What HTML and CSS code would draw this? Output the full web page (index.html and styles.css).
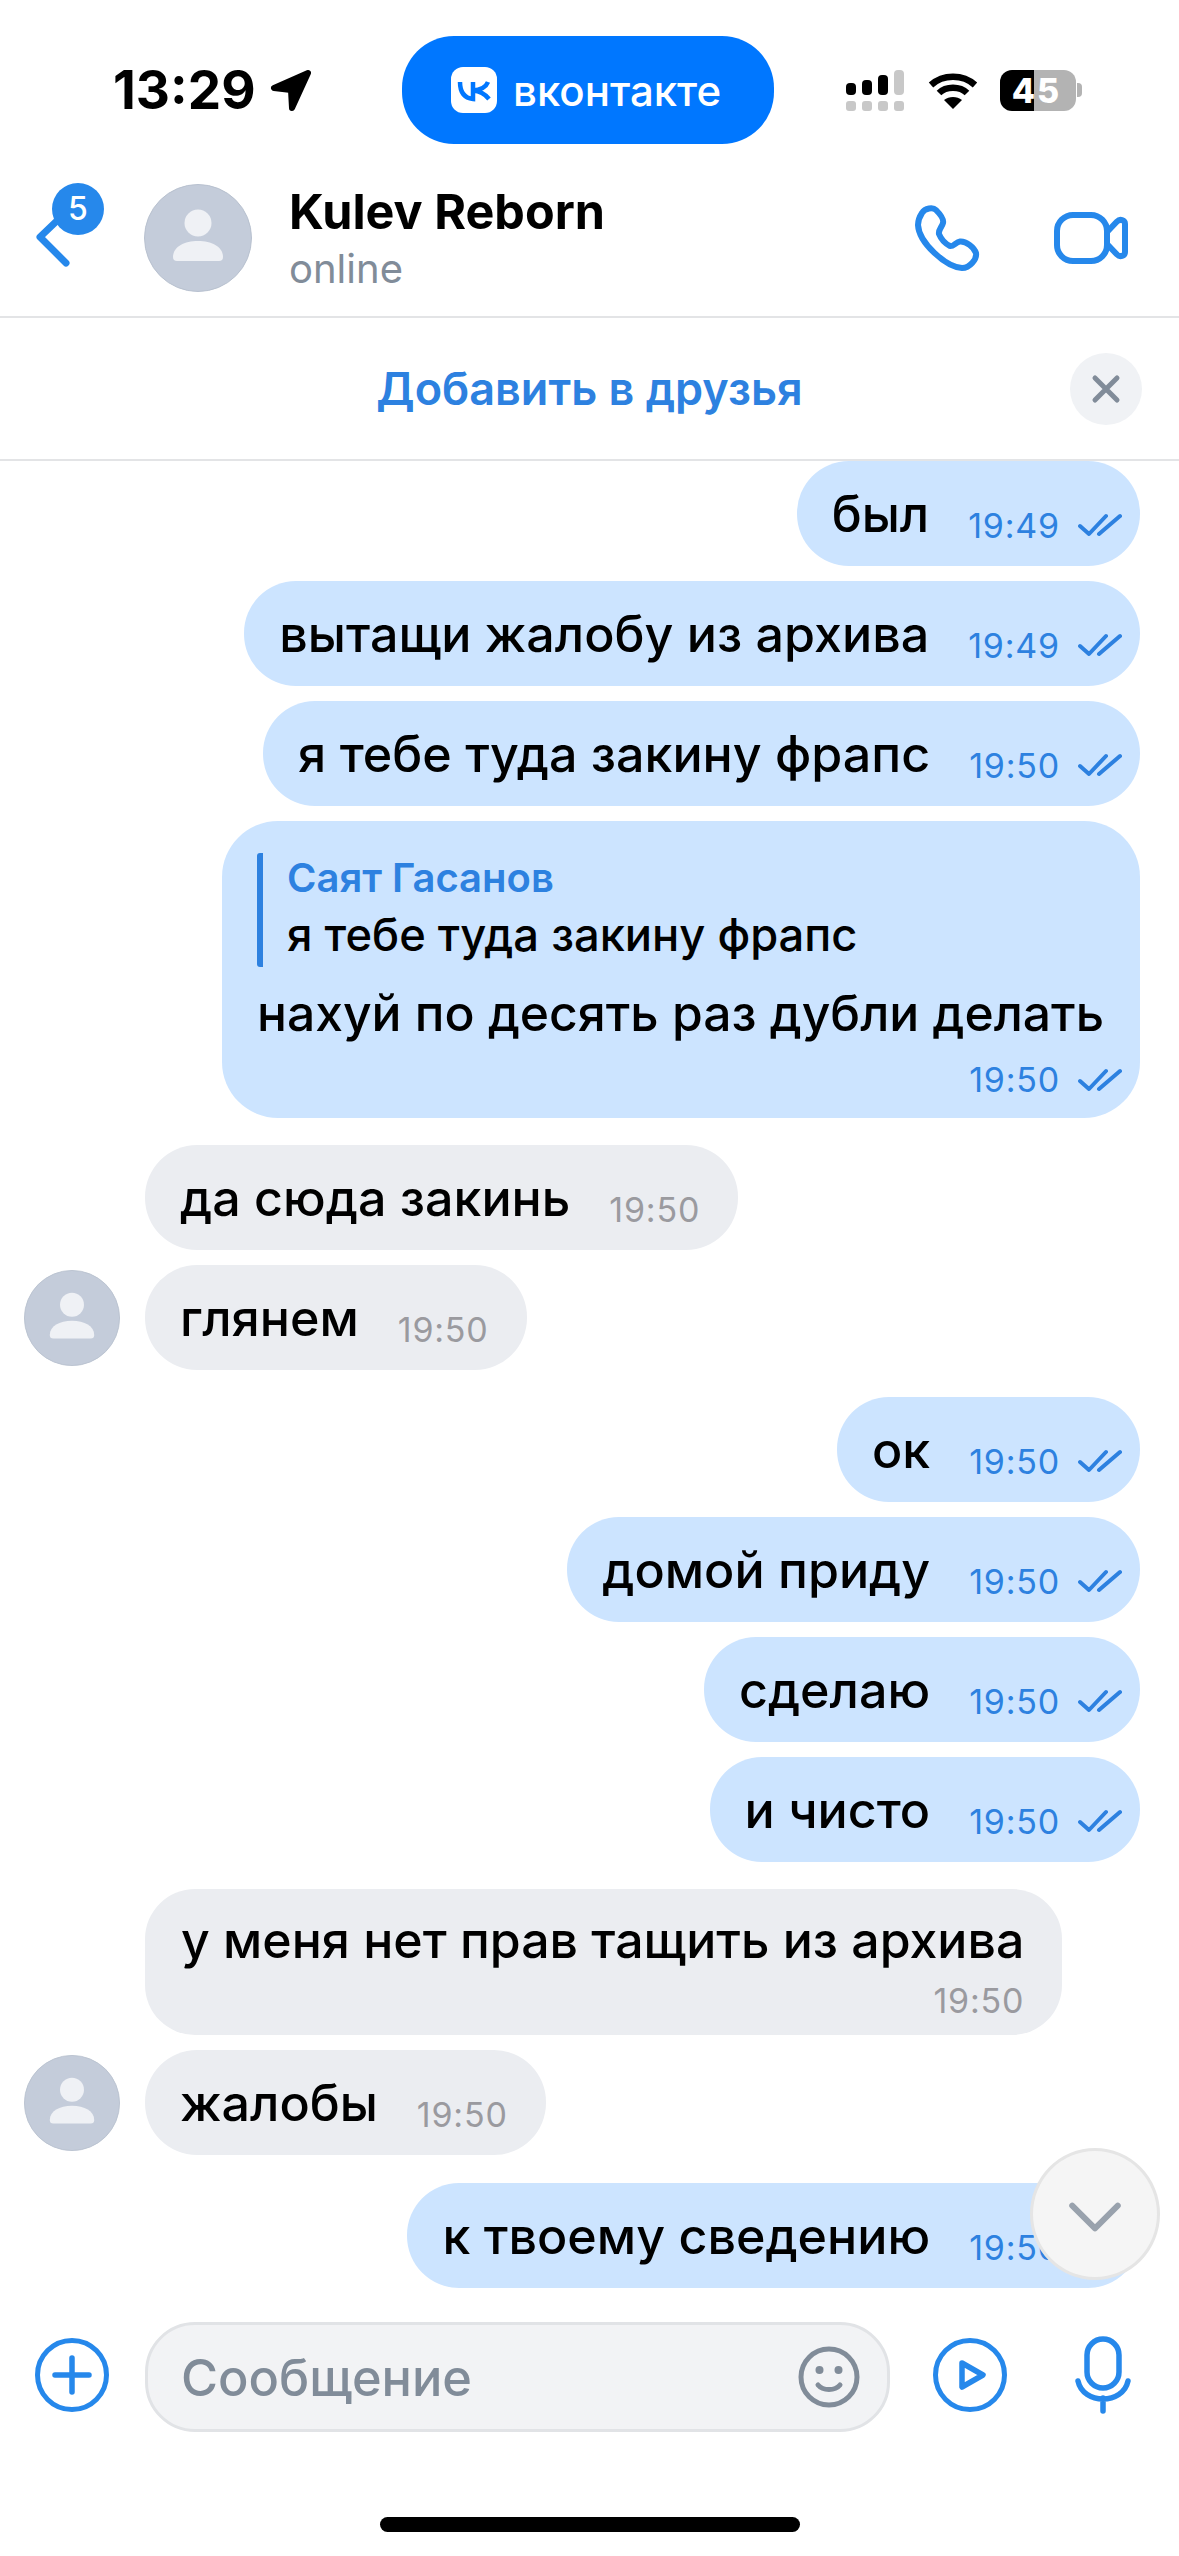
FILE: index.html
```html
<!DOCTYPE html>
<html lang="ru">
<head>
  <meta charset="UTF-8" />
  <title>Kulev Reborn</title>
  <link rel="stylesheet" href="styles.css">
</head>
<body>
  <svg class="defs">
    <symbol id="seen" viewBox="0 0 44 24"><path d="M2 13 L11 21 L28 3 M21 21 L42 3" fill="none" stroke="#2d81e0" stroke-width="4" stroke-linecap="round" stroke-linejoin="round"/></symbol>
    <symbol id="person" viewBox="0 0 108 108"><circle cx="54" cy="54" r="53.500" fill="#c4ccda" stroke="#b8c1cf"/><circle cx="54" cy="39" r="13.500" fill="#eff1f5"/><path d="M29 73 C29 63 40 57 54 57 S79 63 79 73 A4 4 0 0 1 75 77 H33 A4 4 0 0 1 29 73 Z" fill="#eff1f5"/></symbol>
  </svg>

  <div class="status">
    <span class="clock">13:29</span>
    <svg class="loc" width="41" height="41" viewBox="0 0 41 41"><path d="M38 3 L4 18 L21 20 L22 38 Z" fill="#000" stroke="#000" stroke-width="6" stroke-linejoin="round"/></svg>
    <div class="pill">
      <svg width="46" height="46" viewBox="0 0 46 46"><rect width="46" height="46" rx="12" fill="#fff"/><path d="M9 15 C9 25 13 31 22 32 V15 M37 15 C35 20 29 23 22 23.500 C29 24 34 27 38 32" fill="none" stroke="#0077ff" stroke-width="4.500"/></svg>
      <span>вконтакте</span>
    </div>
    <div class="signal">
      <div class="bars"><i class="b1"></i><i class="b2"></i><i class="b3"></i><i class="b4"></i></div>
      <div class="dots"><i></i><i></i><i></i><i></i></div>
    </div>
    <svg class="wifi" width="50" height="38" viewBox="0 0 50 38"><path d="M3 14 C15 3 35 3 47 14 M11 22 C18 15 32 15 39 22" fill="none" stroke="#000" stroke-width="6.500"/><path d="M16 29 C21 25 29 25 34 29 L25 38 Z" fill="#000"/></svg>
    <div class="battery">45</div>
    <div class="nub"></div>
  </div>

  <header class="head">
    <div class="back">
      <svg width="40" height="62" viewBox="0 0 40 62"><path d="M28 8 L5 30 L31 56" fill="none" stroke="#2688eb" stroke-width="7" stroke-linecap="round" stroke-linejoin="round"/></svg>
      <span class="badge">5</span>
    </div>
    <svg class="ava big"><use href="#person"/></svg>
    <div class="who">
      <div class="name">Kulev Reborn</div>
      <div class="online">online</div>
    </div>
    <svg class="phone" width="66" height="66" viewBox="0 0 66 66"><path d="M8 8 C11 3 19 2 22 5 C26 9 30 14 29 18 C28 22 24 25 25 29 C27 34 32 39 36 41 C39 42 42 37 46 36.500 C52 36 60 42 62 48 C63 54 56 63 48 63 C32 62 5 38 4 20 C4 15 6 11 8 8 Z" fill="none" stroke="#2688eb" stroke-width="6" stroke-linejoin="round"/></svg>
    <svg class="video" width="74" height="52" viewBox="0 0 74 52"><rect x="3" y="3" width="50" height="46" rx="16" fill="none" stroke="#2688eb" stroke-width="6"/><path d="M53 20 L63 9.500 C66 6.500 71 8 71 12 V40 C71 44 66 45.500 63 42.500 L53 32" fill="none" stroke="#2688eb" stroke-width="6" stroke-linejoin="round"/></svg>
  </header>

  <div class="addbar">
    <span></span>
    <span class="addtext">Добавить в друзья</span>
    <div class="close">
      <svg width="34" height="34" viewBox="0 0 34 34"><path d="M6 6 L28 28 M28 6 L6 28" stroke="#818c99" stroke-width="5" stroke-linecap="round"/></svg>
    </div>
  </div>

  <main class="chat">
    <div class="row out"><div class="bubble"><span class="text">был</span><span class="time">19:49</span><svg class="check"><use href="#seen"/></svg></div></div>
    <div class="row out"><div class="bubble"><span class="text">вытащи жалобу из архива</span><span class="time">19:49</span><svg class="check"><use href="#seen"/></svg></div></div>
    <div class="row out"><div class="bubble"><span class="text">я тебе туда закину фрапс</span><span class="time">19:50</span><svg class="check"><use href="#seen"/></svg></div></div>
    <div class="row out">
      <div class="bubble reply">
        <div class="quote">
          <div class="qname">Саят Гасанов</div>
          <div class="qtext">я тебе туда закину фрапс</div>
        </div>
        <div class="text">нахуй по десять раз дубли делать</div>
        <div class="meta"><span class="time">19:50</span><svg class="check"><use href="#seen"/></svg></div>
      </div>
    </div>

    <div class="row in group"><div class="bubble"><span class="text">да сюда закинь</span><span class="time">19:50</span></div></div>
    <div class="row in tail">
      <svg class="ava"><use href="#person"/></svg>
      <div class="bubble"><span class="text">глянем</span><span class="time">19:50</span></div>
    </div>

    <div class="row out group"><div class="bubble"><span class="text">ок</span><span class="time">19:50</span><svg class="check"><use href="#seen"/></svg></div></div>
    <div class="row out"><div class="bubble"><span class="text">домой приду</span><span class="time">19:50</span><svg class="check"><use href="#seen"/></svg></div></div>
    <div class="row out"><div class="bubble"><span class="text">сделаю</span><span class="time">19:50</span><svg class="check"><use href="#seen"/></svg></div></div>
    <div class="row out"><div class="bubble"><span class="text">и чисто</span><span class="time">19:50</span><svg class="check"><use href="#seen"/></svg></div></div>

    <div class="row in group">
      <div class="bubble long">
        <div class="text">у меня нет прав тащить из архива</div>
        <div class="meta"><span class="time">19:50</span></div>
      </div>
    </div>
    <div class="row in tail">
      <svg class="ava"><use href="#person"/></svg>
      <div class="bubble"><span class="text">жалобы</span><span class="time">19:50</span></div>
    </div>

    <div class="row out group2"><div class="bubble"><span class="text">к твоему сведению</span><span class="time">19:50</span><svg class="check"><use href="#seen"/></svg></div></div>

    <div class="scroll-down">
      <svg width="54" height="31" viewBox="0 0 58 34"><path d="M4 4 L29 29 L54 4" fill="none" stroke="#99a2ad" stroke-width="6.500" stroke-linecap="round" stroke-linejoin="round"/></svg>
    </div>
  </main>

  <footer class="composer">
    <svg width="74" height="74" viewBox="0 0 74 74"><circle cx="37" cy="37" r="34.500" fill="none" stroke="#2688eb" stroke-width="5"/><path d="M37 20 V54 M20 37 H54" stroke="#2688eb" stroke-width="5.500" stroke-linecap="round"/></svg>
    <div class="input">
      <span class="placeholder">Сообщение</span>
      <svg width="62" height="62" viewBox="0 0 62 62"><circle cx="31" cy="31" r="28" fill="none" stroke="#818c99" stroke-width="5"/><circle cx="21.500" cy="24" r="4" fill="#818c99"/><circle cx="40.500" cy="24" r="4" fill="#818c99"/><path d="M20 39 C25 45 37 45 42 39" fill="none" stroke="#818c99" stroke-width="5" stroke-linecap="round"/></svg>
    </div>
    <svg class="play" width="74" height="74" viewBox="0 0 74 74"><circle cx="37" cy="37" r="34.500" fill="none" stroke="#2688eb" stroke-width="5"/><path d="M29 25 L50 37 L29 49 Z" fill="none" stroke="#2688eb" stroke-width="5.500" stroke-linejoin="round"/></svg>
    <svg class="mic" width="56" height="78" viewBox="0 0 56 78"><rect x="12" y="3" width="32" height="49" rx="16" fill="none" stroke="#2688eb" stroke-width="5.500"/><path d="M3 45 C8 69 48 69 53 45 M28 62 V75" fill="none" stroke="#2688eb" stroke-width="5.500" stroke-linecap="round"/></svg>
  </footer>
  <div class="homebar"></div>
</body>
</html>
```

FILE: styles.css
```css
* { box-sizing: border-box; }
html, body {
  margin: 0;
  padding: 0;
}
body {
  width: 1179px;
  height: 2556px;
  overflow: hidden;
  background: #fff;
  color: #000;
  font-family: Inter, "Liberation Sans", sans-serif;
  display: flex;
  flex-direction: column;
}
.defs { display: none; }

/* status bar */
.status {
  height: 165px;
  flex: none;
  display: flex;
  align-items: center;
  padding-left: 113px;
  padding-top: 15px;
}
.clock {
  font-size: 53px;
  font-weight: 700;
  width: 142px;
  white-space: nowrap;
}
.loc { margin-left: 15px; }
.pill {
  width: 372px;
  height: 108px;
  margin-left: 91px;
  background: #0077ff;
  border-radius: 52px;
  display: flex;
  align-items: center;
  padding-left: 49px;
  gap: 16px;
  color: #fff;
  font-size: 42px;
  font-weight: 500;
}
.signal {
  margin-left: 72px;
  width: 58px;
  display: flex;
  flex-direction: column;
  gap: 6px;
}
.bars, .dots {
  display: flex;
  justify-content: space-between;
  align-items: flex-end;
}
.bars i {
  width: 10px;
  background: #000;
  border-radius: 4px;
}
.b1 { height: 12px; }
.b2 { height: 15px; }
.b3 { height: 20px; }
.bars .b4 { height: 25px; background: #c8c8c8; }
.dots i {
  width: 10px;
  height: 10px;
  background: #c8c8c8;
  border-radius: 3px;
}
.wifi { margin-left: 24px; }
.battery {
  margin-left: 22px;
  width: 76px;
  height: 41px;
  border-radius: 12px;
  background: linear-gradient(90deg, #000 0, #000 34px, #b3b3b3 34px);
  color: #fff;
  font-size: 34px;
  font-weight: 800;
  letter-spacing: 2px;
  padding-right: 3px;
  text-align: center;
  line-height: 41px;
}
.nub {
  margin-left: 1px;
  width: 5px;
  height: 14px;
  background: #b3b3b3;
  border-radius: 0 4px 4px 0;
}

/* header */
.head {
  height: 153px;
  flex: none;
  display: flex;
  align-items: center;
  border-bottom: 2px solid #e3e4e6;
  padding-left: 35px;
  padding-bottom: 6px;
}
.back {
  position: relative;
  width: 109px;
  height: 62px;
}
.back svg { display: block; }
.badge {
  position: absolute;
  left: 17px;
  top: -24px;
  width: 52px;
  height: 52px;
  border-radius: 50%;
  background: #2688eb;
  color: #fff;
  font-size: 32px;
  font-weight: 500;
  text-align: center;
  line-height: 52px;
}
.ava {
  width: 96px;
  height: 96px;
  flex: none;
}
.ava.big {
  width: 108px;
  height: 108px;
}
.who {
  margin-left: 37px;
  flex: 1;
}
.name {
  font-size: 48.500px;
  font-weight: 700;
  line-height: 56px;
}
.online {
  font-size: 40px;
  color: #818c99;
  line-height: 46px;
  margin-top: 6px;
}
.phone { margin-right: 74px; }
.video { margin-right: 51px; }

/* add to friends */
.addbar {
  height: 143px;
  flex: none;
  display: grid;
  grid-template-columns: 1fr auto 1fr;
  align-items: center;
  padding: 0 37px;
  border-bottom: 2px solid #e3e4e6;
}
.addtext {
  color: #2d81e0;
  font-size: 45px;
  font-weight: 600;
}
.close {
  justify-self: end;
  width: 72px;
  height: 72px;
  border-radius: 50%;
  background: #f0f2f5;
  display: flex;
  align-items: center;
  justify-content: center;
}

/* messages */
.chat {
  flex: 1;
  position: relative;
  overflow: hidden;
  display: flex;
  flex-direction: column;
  gap: 15px;
}
.row { display: flex; }
.row.out {
  justify-content: flex-end;
  padding-right: 39px;
}
.row.in { padding-left: 145px; }
.row.tail {
  padding-left: 24px;
  align-items: center;
  gap: 25px;
}
.group { margin-top: 12px; }
.group2 { margin-top: 13px; }
.bubble {
  height: 105px;
  border-radius: 52px;
  display: flex;
  align-items: center;
  padding-left: 35px;
}
.out .bubble {
  background: #cce4ff;
  padding-right: 18px;
}
.in .bubble {
  background: #ebedf1;
  padding-right: 38px;
}
.text {
  font-size: 50.200px;
  font-weight: 500;
  line-height: 60px;
  white-space: nowrap;
}
.time {
  font-size: 34px;
  letter-spacing: 0.8px;
  margin-left: 39px;
  margin-top: 24px;
}
.out .time { color: #2d81e0; }
.in .time { color: #9a9a9f; }
.check {
  width: 44px;
  height: 24px;
  margin-left: 18px;
  margin-top: 22px;
  flex: none;
}
.bubble.reply {
  height: 297px;
  flex-direction: column;
  align-items: flex-start;
  padding: 32px 18px 0 35px;
  border-radius: 56px;
}
.quote {
  border-left: 6px solid #2d81e0;
  border-radius: 3px;
  height: 114px;
  padding-left: 24px;
}
.qname {
  color: #2d81e0;
  font-size: 40px;
  font-weight: 600;
  line-height: 50px;
}
.qtext {
  font-size: 45.300px;
  font-weight: 500;
  line-height: 56px;
  margin-top: 4px;
}
.reply .text {
  font-size: 49.800px;
  margin-top: 16px;
  margin-right: 18px;
}
.meta {
  align-self: flex-end;
  display: flex;
  align-items: center;
  margin-top: 16px;
}
.meta .time, .meta .check { margin-top: 0; }
.bubble.long {
  height: 146px;
  flex-direction: column;
  align-items: flex-start;
  padding: 21px 38px 0 36px;
  border-radius: 50px;
}
.long .text { font-size: 50px; }
.long .meta { margin-top: 10px; }
.scroll-down {
  position: absolute;
  left: 1030px;
  top: 1687px;
  width: 130px;
  height: 132px;
  padding-top: 6px;
  border-radius: 50%;
  background: #f5f5f5;
  border: 3px solid #e5e5e5;
  display: flex;
  align-items: center;
  justify-content: center;
}

/* input row */
.composer {
  flex: none;
  height: 132px;
  padding: 22px 0 0 35px;
  display: flex;
  align-items: center;
}
.composer > svg { flex: none; margin-top: -4px; }
.input {
  width: 745px;
  height: 110px;
  margin-left: 36px;
  background: #f2f3f5;
  border: 3px solid #e1e3e6;
  border-radius: 50px;
  display: flex;
  align-items: center;
  justify-content: space-between;
  padding: 0 27px 0 33px;
}
.placeholder {
  font-size: 50.500px;
  font-weight: 500;
  color: #818c99;
}
.play { margin-left: 43px; }
.mic { margin-left: 68px; }
.homebar {
  flex: none;
  width: 420px;
  height: 15px;
  margin: 85px auto 24px;
  background: #000;
  border-radius: 8px;
}
```
